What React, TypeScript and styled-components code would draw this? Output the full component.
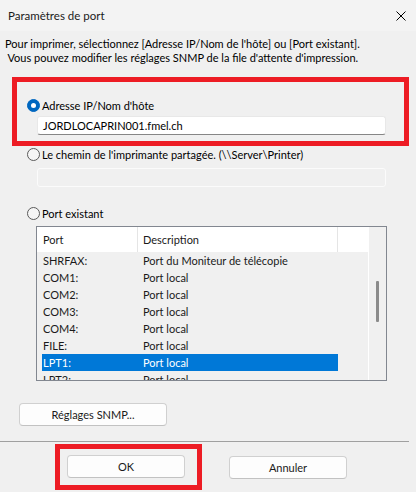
import React from "react";
import styled, { createGlobalStyle } from "styled-components";

const Global = createGlobalStyle`
  html, body { margin: 0; padding: 0; background: #f0f0f0; }
  * { box-sizing: border-box; }
`;

const FONT = `Lato, "Liberation Sans", Arial, sans-serif`;

const Window = styled.div`
  width: 416px;
  height: 492px;
  background: #f0f0f0;
  font-family: ${FONT};
  font-size: 11px;
  color: #000;
  overflow: hidden;
  display: flex;
  flex-direction: column;
`;

const TitleBar = styled.div`
  height: 31px;
  background: #f3f3f3;
  display: flex;
  align-items: center;
  justify-content: space-between;
  padding: 0 10px 0 8px;
`;

const Title = styled.span`
  font-size: 11.5px;
  color: #1a1a1a;
`;

const Intro = styled.div`
  margin-top: 6px;
  padding-left: 5px;
  line-height: 14px;
  white-space: pre;
`;

const Highlight = styled.div<{ $pad: string }>`
  border: 5px solid #ed1c24;
  padding: ${(p) => p.$pad};
`;

const TopHighlight = styled(Highlight)`
  margin: 12px 0 0 12px;
  width: 397px;
`;

const RadioRow = styled.label<{ $left: number }>`
  display: flex;
  align-items: center;
  height: 16px;
  margin-left: ${(p) => p.$left}px;
  gap: 2px;
  white-space: nowrap;
`;

const RadioCircle = styled.span<{ $checked?: boolean }>`
  width: 13px;
  height: 13px;
  border-radius: 50%;
  flex: none;
  display: flex;
  align-items: center;
  justify-content: center;
  ${(p) =>
    p.$checked
      ? `background: #0067c0; border: 1px solid #0067c0;`
      : `background: #f5f5f5; border: 1px solid #5a5a5a;`}
  &::after {
    content: "";
    display: ${(p) => (p.$checked ? "block" : "none")};
    width: 5px;
    height: 5px;
    border-radius: 50%;
    background: #fff;
  }
`;

const TextBox = styled.div<{ $disabled?: boolean; $left: number; $top: number }>`
  width: 349px;
  height: 19px;
  margin: ${(p) => p.$top}px 0 0 ${(p) => p.$left}px;
  border-radius: 3px;
  padding-left: 5px;
  display: flex;
  align-items: center;
  white-space: nowrap;
  ${(p) =>
    p.$disabled
      ? `background: #f0f0f0; border: 1px solid #fbfbfb;`
      : `background: #fff; border: 1px solid #e8e8e8; border-bottom: 1px solid #868686;`}
`;

const ListBox = styled.div`
  margin: 5px 0 0 36px;
  width: 351px;
  height: 155px;
  border: 1px solid #828790;
  display: flex;
  background: #f0f0f0;
`;

const ListMain = styled.div`
  width: 332px;
  border-right: 1px solid #fff;
  display: flex;
  flex-direction: column;
  overflow: hidden;
`;

const Header = styled.div`
  height: 25px;
  background: #fff;
  display: grid;
  grid-template-columns: 101px 200px 1fr;
  flex: none;
`;

const HeaderCell = styled.div<{ $pad: number }>`
  padding-left: ${(p) => p.$pad}px;
  display: flex;
  align-items: center;
  border-right: 1px solid #e5e5e5;
  color: #1a1a1a;
  &:last-child { border-right: none; }
`;

const Row = styled.div<{ $selected?: boolean }>`
  margin-left: 5px;
  width: 296px;
  height: 17px;
  flex: none;
  display: grid;
  grid-template-columns: 100px 1fr;
  align-items: center;
  background: ${(p) => (p.$selected ? "#0078d7" : "transparent")};
  color: ${(p) => (p.$selected ? "#fff" : "#1a1a1a")};
  white-space: nowrap;
`;

const Cell = styled.span`
  padding-left: 1px;
`;

const ScrollTrack = styled.div`
  flex: 1;
  background: #f0f0f0;
`;

const Thumb = styled.div`
  margin: 54px 0 0 7px;
  width: 3px;
  height: 41px;
  background: #8b8b8b;
  border-radius: 1px;
`;

const Button = styled.button<{ $w: number }>`
  width: ${(p) => p.$w}px;
  height: 23px;
  background: #fdfdfd;
  border: 1px solid #d0d0d0;
  border-bottom-color: #c2c2c2;
  border-radius: 4px;
  font-family: ${FONT};
  font-size: 11px;
  color: #1a1a1a;
  padding: 0;
`;

const SnmpButton = styled(Button)`
  margin: 22px 0 0 19px;
`;

const Separator = styled.div`
  margin-top: 15px;
  width: 409px;
  height: 1px;
  background: #a0a0a0;
`;

const ButtonRow = styled.div`
  margin-top: 2px;
  padding-left: 55px;
  display: flex;
  align-items: center;
  gap: 27px;
`;

const Spacer = styled.div<{ $h: number }>`
  height: ${(p) => p.$h}px;
  flex: none;
`;

const rows: [string, string][] = [
  ["SHRFAX:", "Port du Moniteur de télécopie"],
  ["COM1:", "Port local"],
  ["COM2:", "Port local"],
  ["COM3:", "Port local"],
  ["COM4:", "Port local"],
  ["FILE:", "Port local"],
  ["LPT1:", "Port local"],
  ["LPT2:", "Port local"],
];

export default function App() {
  return (
    <>
      <Global />
      <Window>
        <TitleBar>
          <Title>Paramètres de port</Title>
          <svg width="10" height="10" viewBox="0 0 10 10">
            <path d="M0.5 0.5 L9.5 9.5 M9.5 0.5 L0.5 9.5" stroke="#000" strokeWidth="1" />
          </svg>
        </TitleBar>
        <Intro>
          {"Pour imprimer, sélectionnez [Adresse IP/Nom de l'hôte] ou [Port existant].\n Vous pouvez modifier les réglages SNMP de la file d'attente d'impression."}
        </Intro>
        <TopHighlight $pad="15px 0 6px 0">
          <RadioRow $left={10}>
            <RadioCircle $checked />
            Adresse IP/Nom d'hôte
          </RadioRow>
          <TextBox $left={20} $top={3}>JORDLOCAPRIN001.fmel.ch</TextBox>
        </TopHighlight>
        <RadioRow $left={27}>
          <RadioCircle />
          Le chemin de l'imprimante partagée. (\\Server\Printer)
        </RadioRow>
        <TextBox $disabled $left={37} $top={6} />
        <Spacer $h={18} />
        <RadioRow $left={27}>
          <RadioCircle />
          Port existant
        </RadioRow>
        <ListBox>
          <ListMain>
            <Header>
              <HeaderCell $pad={6}>Port</HeaderCell>
              <HeaderCell $pad={5}>Description</HeaderCell>
              <HeaderCell $pad={0} />
            </Header>
            {rows.map(([p, d], i) => (
              <Row key={p} $selected={i === 6}>
                <Cell>{p}</Cell>
                <Cell>{d}</Cell>
              </Row>
            ))}
          </ListMain>
          <ScrollTrack>
            <Thumb />
          </ScrollTrack>
        </ListBox>
        <SnmpButton $w={148}>Réglages SNMP...</SnmpButton>
        <Separator />
        <ButtonRow>
          <Highlight $pad="6px 12px 7px 7px">
            <Button $w={118}>OK</Button>
          </Highlight>
          <Button $w={118}>Annuler</Button>
        </ButtonRow>
      </Window>
    </>
  );
}
